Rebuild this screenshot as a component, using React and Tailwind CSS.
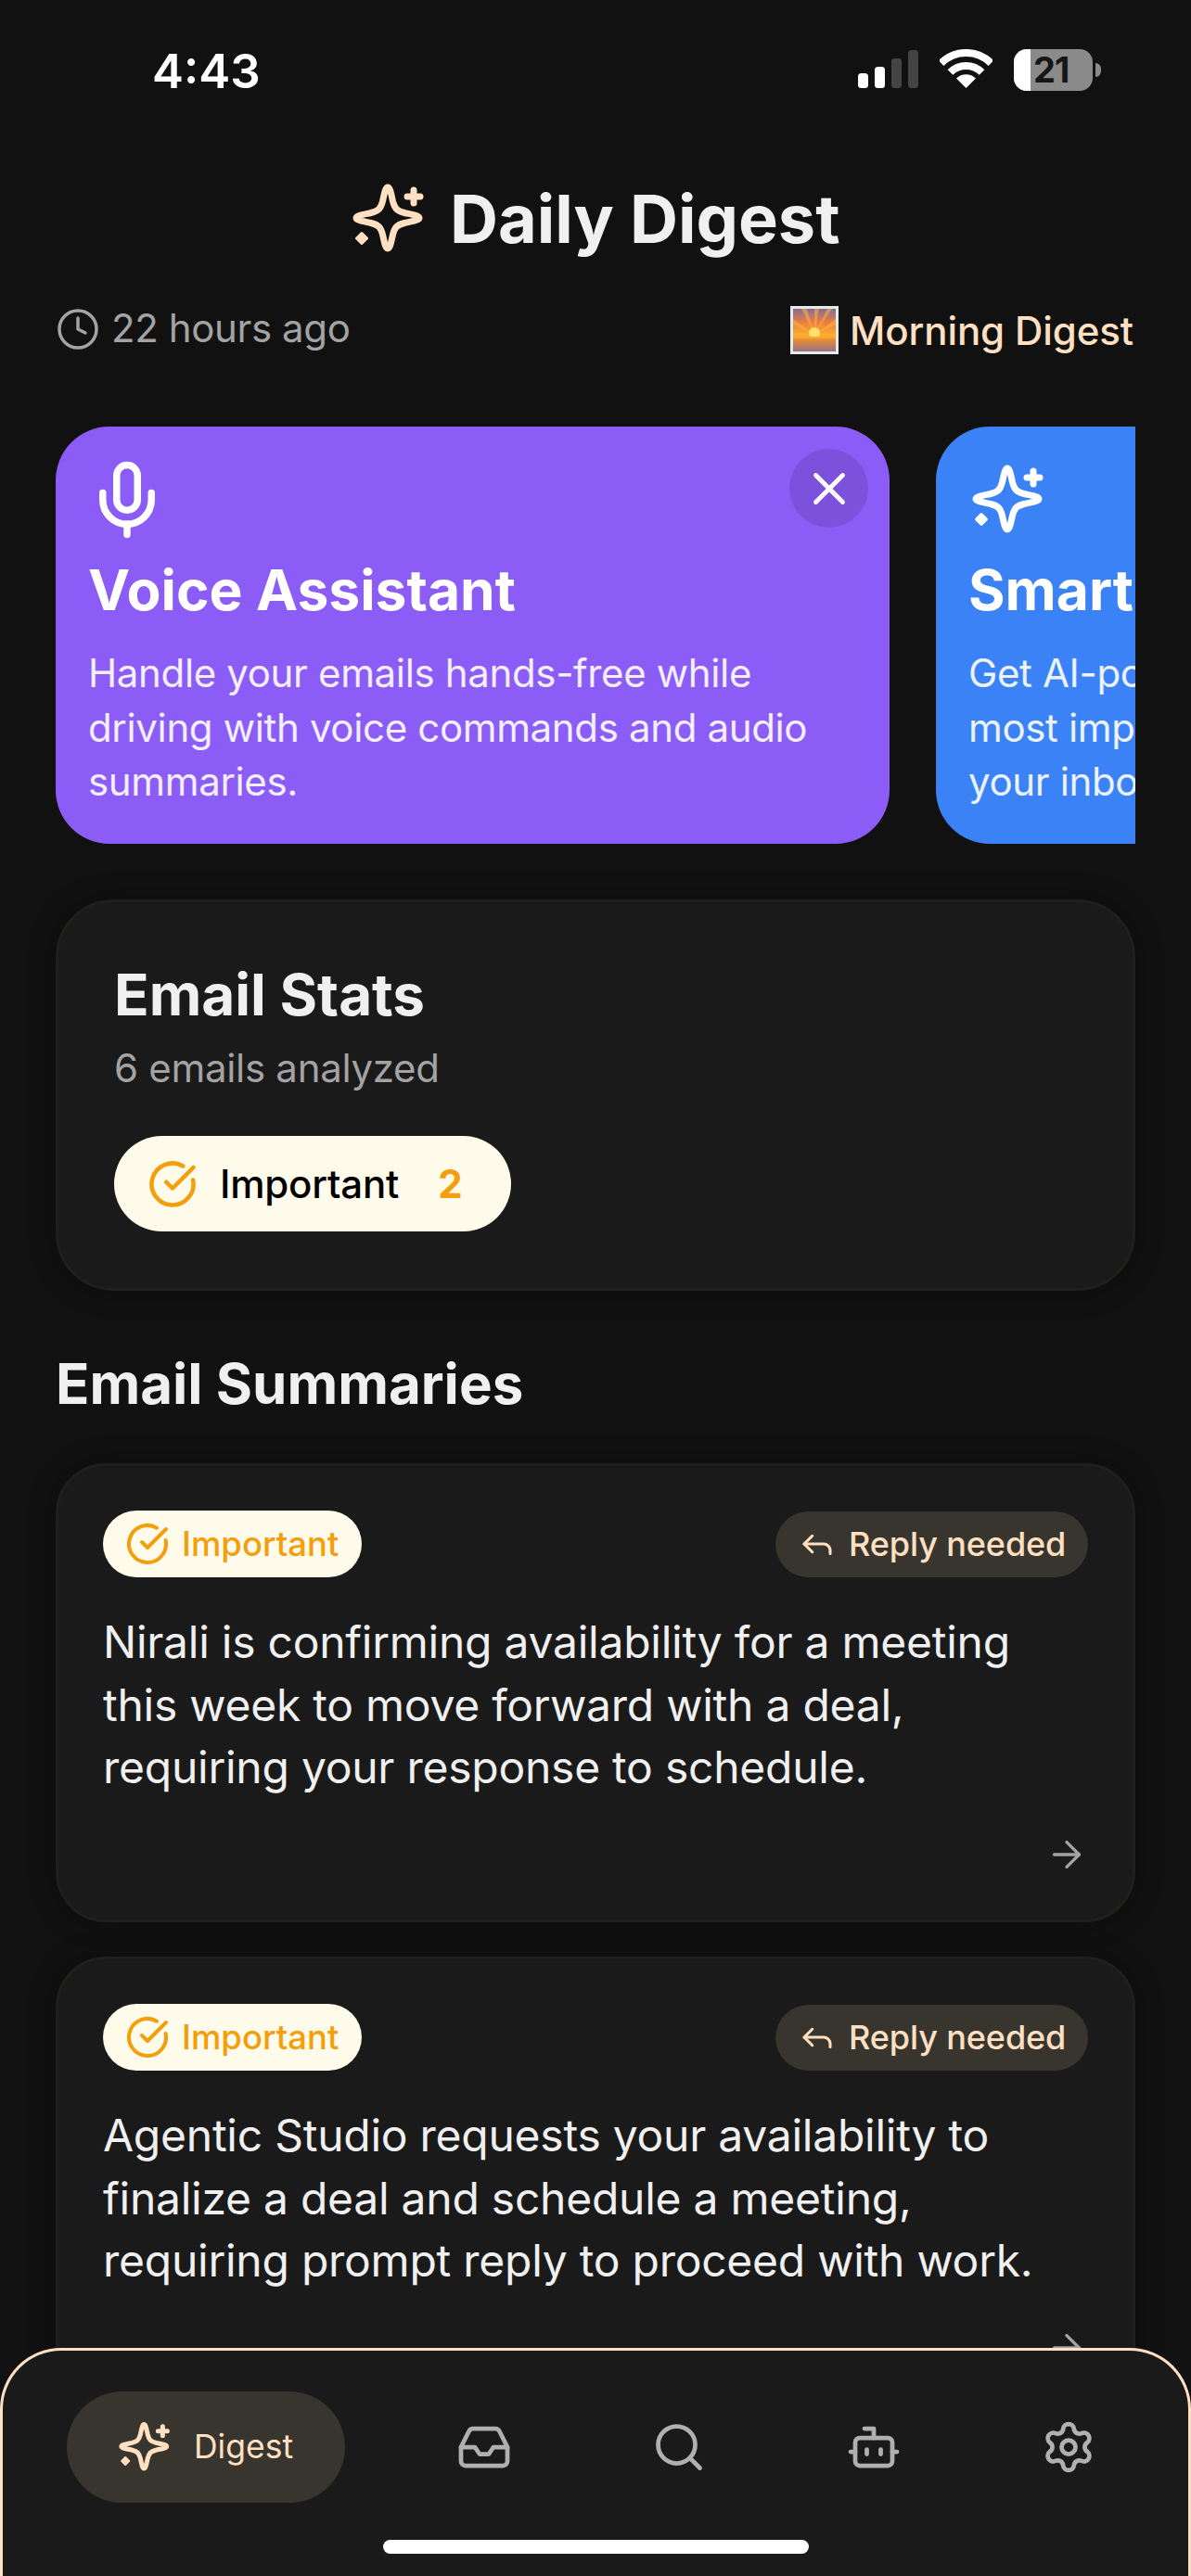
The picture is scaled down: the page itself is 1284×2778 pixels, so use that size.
import { ArrowRight, Bot, CircleCheckBig, Clock, Inbox, Mic, Reply, Search, Settings, X } from "lucide-react";

// four point star with the small plus and dot, used in title, promo card and nav
function Sparkle({ size, className }) {
  return (
    <svg width={size} height={size} viewBox="0 0 78 78" fill="none" className={className}>
      <path
        d="M38 5C40.5 5 41.5 11 43.5 20C45.5 28 48 30.5 56 32.5C65 34.5 72 35.5 72 38C72 40.5 65 41.5 56 43.5C48 45.5 45.5 48 43.5 56C41.5 65 40.5 71 38 71C35.5 71 34.5 65 32.5 56C30.5 48 28 45.5 20 43.5C11 41.5 4 40.5 4 38C4 35.5 11 34.5 20 32.5C28 30.5 30.5 28 32.5 20C34.5 11 35.500 5 38 5Z"
        stroke="currentColor"
        strokeWidth="7"
        strokeLinejoin="round"
      />
      <path d="M66 8V22M59 15H73" stroke="currentColor" strokeWidth="7" strokeLinecap="round" />
      <path d="M10 54.5L15.5 60L10 65.5L4.500 60Z" fill="currentColor" stroke="currentColor" strokeWidth="3" strokeLinejoin="round" />
    </svg>
  );
}

function SunriseEmoji() {
  return (
    <svg width="52" height="52" viewBox="0 0 52 52">
      <defs>
        <linearGradient id="sky" x1="0" y1="0" x2="0" y2="1">
          <stop offset="0" stopColor="#7a6a9c" />
          <stop offset="0.35" stopColor="#f0803c" />
          <stop offset="0.62" stopColor="#fbb02c" />
          <stop offset="0.72" stopColor="#e58a3a" />
          <stop offset="1" stopColor="#8d6f8d" />
        </linearGradient>
      </defs>
      <rect x="1.500" y="1.500" width="49" height="49" fill="url(#sky)" stroke="#e3ebee" strokeWidth="3" />
      <path d="M26 31L12 3H18ZM26 31L26 3H31ZM26 31L40 3H45ZM26 31L3 14V20ZM26 31L49 14V20Z" fill="#ffb347" opacity="0.55" />
      <circle cx="26" cy="29" r="6" fill="#ffe26a" />
      <rect x="3" y="33" width="46" height="2" fill="#f8a62f" />
    </svg>
  );
}

function StatusBar() {
  return (
    <div className="flex h-[150px] items-start justify-between pt-[49px] pr-[97px] pl-[164px]">
      <span className="text-[51px] leading-[56px] font-semibold text-white">4:43</span>
      <div className="flex items-start gap-[23px] pt-[4px]">
        <svg width="65" height="46" viewBox="0 0 65 46" className="mt-[1px]">
          <rect x="0" y="25" width="11" height="16" rx="3.500" fill="#fff" />
          <rect x="18" y="18" width="11" height="23" rx="3.500" fill="#fff" />
          <rect x="36" y="9" width="11" height="32" rx="3.500" fill="#444" />
          <rect x="54" y="0" width="11" height="41" rx="3.500" fill="#444" />
        </svg>
        <svg width="57" height="42" viewBox="0 0 57 42" fill="none">
          <path d="M1.600 15.100A38 38 0 0 1 55.400 15.100" stroke="#fff" strokeWidth="8" />
          <path d="M11.500 25A24 24 0 0 1 45.500 25" stroke="#fff" strokeWidth="8" />
          <path d="M28.500 42L18 31.500A15 15 0 0 1 39 31.500Z" fill="#fff" />
        </svg>
        <div className="flex items-center gap-[3px]">
          <div className="flex h-[45px] w-[85px] rounded-[14px] bg-[#8a8a8a]">
            <div className="h-full w-[18px] rounded-l-[14px] bg-white" />
            <span className="pl-[3px] text-[38px] leading-[45px] font-bold tracking-[-1px] text-[#161616]">21</span>
          </div>
          <div className="h-[15px] w-[6px] rounded-r-full bg-[#8a8a8a]" />
        </div>
      </div>
    </div>
  );
}

function PromoCard({ color, icon, title, lines, children }) {
  return (
    <div className={`relative h-[450px] w-[899px] shrink-0 rounded-[58px] pt-[38px] pl-[35px] ${color}`}>
      <div className="flex h-[80px] items-center">{icon}</div>
      <h2 className="mt-[23px] text-[60.500px] leading-[70px] font-bold whitespace-nowrap text-white">{title}</h2>
      <p className="mt-[26px] text-[42px] leading-[58.5px] tracking-[-0.35px] whitespace-nowrap text-white/90">
        {lines.map((l) => (
          <span key={l} className="block">{l}</span>
        ))}
      </p>
      {children}
    </div>
  );
}

function Badge() {
  return (
    <div className="flex h-[72px] w-[279px] items-center gap-[13px] rounded-full bg-[#fffbeb] pl-[24px] text-[36.500px] font-medium text-[#f59e0b]">
      <CircleCheckBig size={48} strokeWidth={2} />
      <span>Important</span>
    </div>
  );
}

function SummaryCard({ lines }) {
  return (
    <div className="h-[495px] rounded-[54px] border-[3px] border-[#1f1f1b] bg-[#1a1a1a] pt-[48px] pr-[48px] pl-[48px] shadow-[0_0_30px_rgba(0,0,0,0.3)]">
      <div className="flex items-center justify-between">
        <Badge />
        <div className="flex h-[71px] w-[337px] items-center gap-[13px] rounded-full bg-[#38352f] pl-[24px] text-[36px] font-medium tracking-[-0.1px] text-[#ffe0c2]">
          <Reply size={42} strokeWidth={1.75} />
          <span>Reply needed</span>
        </div>
      </div>
      <p className="mt-[36px] text-[48px] leading-[67.500px] tracking-[-0.25px] text-[#f0f0f0]">
        {lines.map((l) => (
          <span key={l} className="block whitespace-nowrap">{l}</span>
        ))}
      </p>
      <div className="mt-[37px] flex justify-end text-[#a3a3a3]">
        <ArrowRight size={46} strokeWidth={1.75} />
      </div>
    </div>
  );
}

function BottomNav() {
  return (
    <div className="absolute inset-x-0 bottom-0 h-[246px] rounded-t-[66px] border-x-[3px] border-t-[3px] border-[#ffe0c2] bg-[#1a1a1a] pt-[44px]">
      <div className="flex items-center pl-[69px] text-[#b0b0b0]">
        <div className="flex h-[120px] w-[300px] items-center gap-[25px] rounded-full bg-[#38352f] pl-[56px] text-[#ffe0c2]">
          <Sparkle size={56} />
          <span className="text-[35.500px] leading-[44px]">Digest</span>
        </div>
        <div className="ml-[120px] flex gap-[150px]">
          <Inbox size={60} strokeWidth={1.9} />
          <Search size={60} strokeWidth={1.9} />
          <Bot size={60} strokeWidth={1.9} />
          <Settings size={60} strokeWidth={1.9} />
        </div>
      </div>
      <div className="mt-[40px] flex justify-center">
        <div className="h-[15px] w-[459px] rounded-full bg-white" />
      </div>
    </div>
  );
}

export default function App() {
  return (
    <div className="relative h-[2778px] w-[1284px] overflow-hidden bg-[#111111] font-['Inter',sans-serif]">
      <StatusBar />

      {/* title */}
      <div className="mt-[47px] flex h-[78px] items-center pl-[380px]">
        <Sparkle size={78} className="text-[#ffe0c2]" />
        <h1 className="ml-[27px] text-[72px] leading-[78px] font-bold text-[#f0f0f0]">Daily Digest</h1>
      </div>

      {/* meta row */}
      <div className="mt-[55px] flex h-[52px] items-center justify-between pr-[62px] pl-[60px]">
        <div className="flex items-center gap-[12px] text-[#a3a3a3]">
          <Clock size={48} strokeWidth={1.75} className="mt-[-2px]" />
          <span className="mt-[-5px] text-[42px] tracking-[-0.4px]">22 hours ago</span>
        </div>
        <div className="flex items-center gap-[12px]">
          <SunriseEmoji />
          <span className="text-[42px] font-medium tracking-[-0.1px] text-[#ffe0c2]">Morning Digest</span>
        </div>
      </div>

      {/* promo carousel */}
      <div className="mx-[60px] mt-[78px] flex gap-[50px] overflow-hidden">
        <PromoCard
          color="bg-[#8b5cf6]"
          icon={<Mic size={90} strokeWidth={2} className="mt-[2px] ml-[-3px] text-white" />}
          title="Voice Assistant"
          lines={["Handle your emails hands-free while", "driving with voice commands and audio", "summaries."]}
        >
          <button className="absolute top-[24px] right-[23px] flex h-[85px] w-[85px] items-center justify-center rounded-full bg-black/10 text-white">
            <X size={58} strokeWidth={2} />
          </button>
        </PromoCard>
        <PromoCard
          color="bg-[#3b82f6]"
          icon={<Sparkle size={78} className="mt-[2px] ml-[4px] text-white" />}
          title="Smart Summaries"
          lines={["Get AI-powered summaries of your", "most important messages from", "your inbox."]}
        />
      </div>

      {/* stats */}
      <div className="mx-[60px] mt-[60px] h-[422px] rounded-[62px] border-[3px] border-[#1f1f1b] bg-[#1a1a1a] pt-[65px] pl-[60px] shadow-[0_0_30px_rgba(0,0,0,0.3)]">
        <h2 className="text-[62px] leading-[70px] font-bold text-[#f0f0f0]">Email Stats</h2>
        <p className="mt-[16px] text-[42px] leading-[56px] tracking-[-0.3px] text-[#a3a3a3]">6 emails analyzed</p>
        <div className="mt-[45px] flex h-[103px] w-[428px] items-center rounded-full bg-[#fffbeb] pl-[36px] text-[42px] font-medium">
          <CircleCheckBig size={54} strokeWidth={2} className="text-[#f59e0b]" />
          <span className="ml-[24px] tracking-[-0.2px] text-black">Important</span>
          <span className="ml-[42px] font-bold text-[#f59e0b]">2</span>
        </div>
      </div>

      <h2 className="mt-[65px] ml-[60px] text-[60px] leading-[70px] font-bold text-[#f0f0f0]">Email Summaries</h2>

      <div className="mx-[60px] mt-[51px] flex flex-col gap-[37px]">
        <SummaryCard lines={["Nirali is confirming availability for a meeting", "this week to move forward with a deal,", "requiring your response to schedule."]} />
        <SummaryCard lines={["Agentic Studio requests your availability to", "finalize a deal and schedule a meeting,", "requiring prompt reply to proceed with work."]} />
      </div>

      <BottomNav />
    </div>
  );
}
